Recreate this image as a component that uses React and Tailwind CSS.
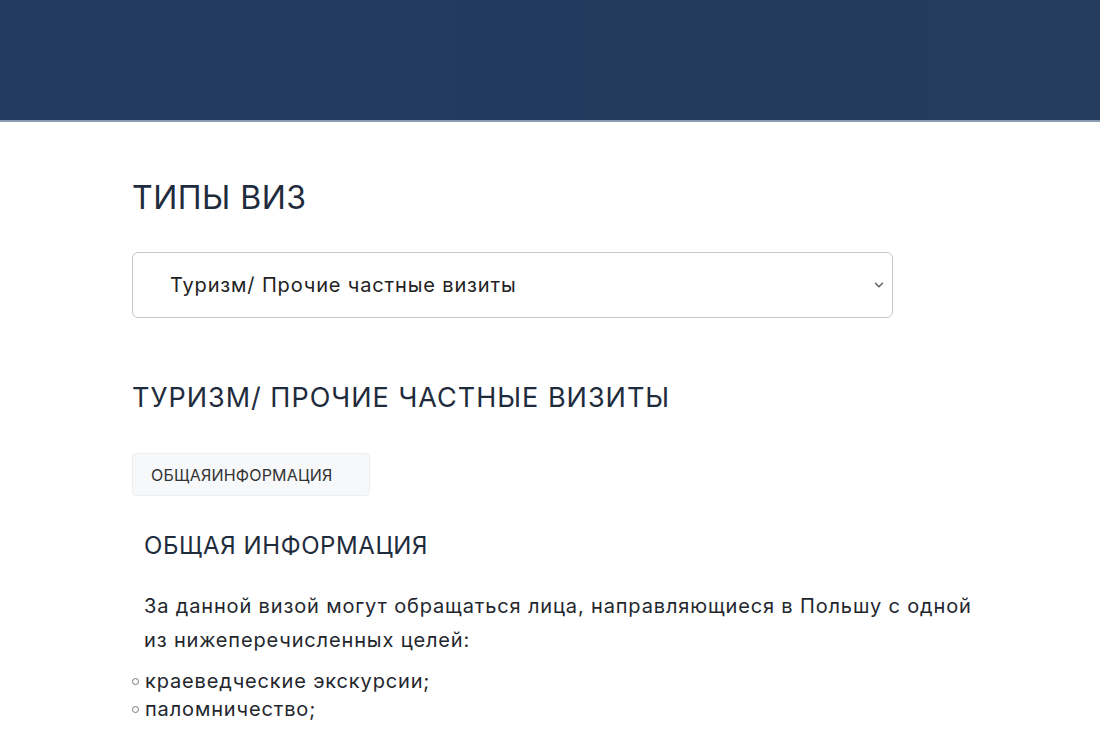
export default function App() {
  return (
    <div className="w-[1100px] h-[730px] overflow-hidden bg-white" style={{ fontFamily: 'Inter, "Noto Sans", sans-serif' }}>
      <div className="h-[122px] bg-gradient-to-r from-[#243a5f] via-[#233a5e] to-[#263c5f] border-b-2 border-[#8a9bb3]" />
      <div className="pl-[132px] pr-[100px]">
        <h1 className="mt-[56px] text-[32px] leading-[40px] text-[#1f2c3d] tracking-[0.5px]">ТИПЫ ВИЗ</h1>
        <div className="mt-[34px] h-[66px] w-[761px] rounded-[6px] border border-[#c4c7cc] flex items-center justify-between pl-[37px] pr-[6px]">
          <span className="text-[20px] text-[#222] tracking-[0.85px]">Туризм/ Прочие частные визиты</span>
          <svg width="14" height="14" viewBox="0 0 16 16" fill="none" stroke="#666" strokeWidth="1.8" strokeLinecap="round" strokeLinejoin="round">
            <path d="M4 6l4 4 4-4" />
          </svg>
        </div>
        <h2 className="mt-[62px] text-[27px] leading-[36px] text-[#1f2c3d] tracking-[1px]">ТУРИЗМ/ ПРОЧИЕ ЧАСТНЫЕ ВИЗИТЫ</h2>
        <div className="mt-[37px] inline-flex h-[43px] w-[238px] items-center pl-[18px] rounded-[4px] border border-[#eceef1] bg-[#f7f8fa] text-[16px] text-[#333] tracking-[0.2px]">ОБЩАЯИНФОРМАЦИЯ</div>
        <div className="pl-[12px]">
          <h3 className="mt-[34px] text-[24px] leading-[32px] text-[#1f2c3d] tracking-[0.6px]">ОБЩАЯ ИНФОРМАЦИЯ</h3>
          <p className="mt-[27px] w-[845px] text-[20px] leading-[34px] text-[#23272d] tracking-[0.85px]">За данной визой могут обращаться лица, направляющиеся в Польшу с одной из нижеперечисленных целей:</p>
        </div>
        <ul className="mt-[10px] text-[20px] leading-[28px] text-[#23272d] tracking-[0.85px]">
          {['краеведческие экскурсии;', 'паломничество;', 'посещение родственников или знакомых, проживающих на территории Польши;'].map((t) => (
            <li key={t} className="flex items-center">
              <span className="w-[7px] h-[7px] rounded-full border border-[#777] mr-[6px]" />
              <span>{t}</span>
            </li>
          ))}
        </ul>
      </div>
    </div>
  );
}
